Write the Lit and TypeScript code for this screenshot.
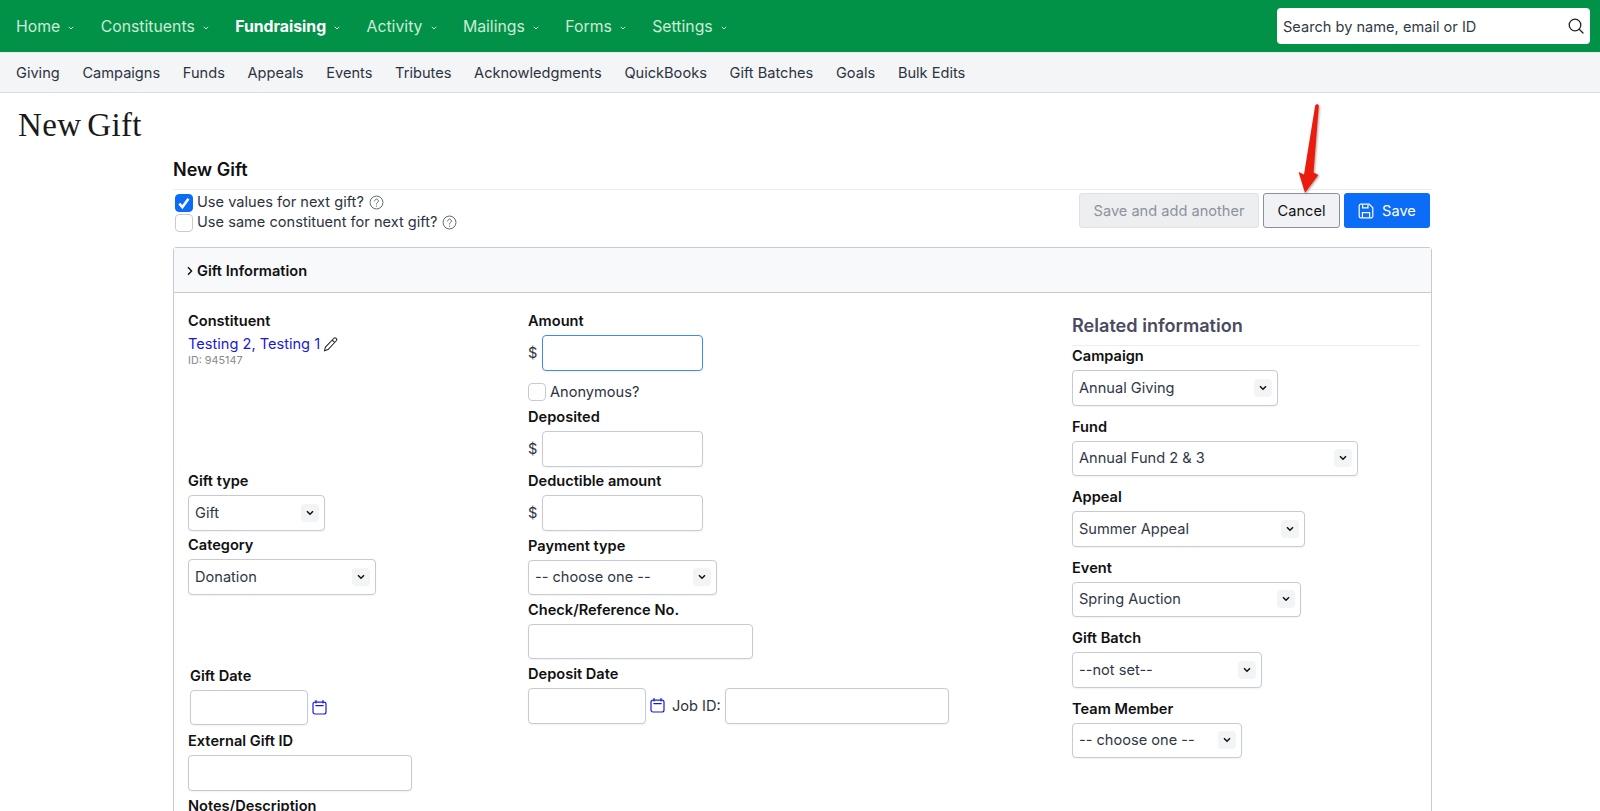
import { LitElement, html, css, svg } from "lit";
import { customElement } from "lit/decorators.js";
import { styleMap } from "lit/directives/style-map.js";

const NAV = ["Home", "Constituents", "Fundraising", "Activity", "Mailings", "Forms", "Settings"];
const SUBNAV = ["Giving", "Campaigns", "Funds", "Appeals", "Events", "Tributes", "Acknowledgments", "QuickBooks", "Gift Batches", "Goals", "Bulk Edits"];
const RELATED = [
	{ label: "Campaign", value: "Annual Giving", width: 206 },
	{ label: "Fund", value: "Annual Fund 2 & 3", width: 286 },
	{ label: "Appeal", value: "Summer Appeal", width: 233 },
	{ label: "Event", value: "Spring Auction", width: 229 },
	{ label: "Gift Batch", value: "--not set--", width: 190 },
	{ label: "Team Member", value: "-- choose one --", width: 170 },
];

const caret = html`<svg class="caret" viewBox="0 0 6 4" width="6" height="4"><path d="M.8.8 3 3 5.2.8" fill="none" stroke="currentColor" stroke-width="1"/></svg>`;
const helpIcon = html`<svg class="help" viewBox="0 0 16 16" width="15" height="15" fill="none" stroke="#62676f" stroke-width="1.05"><circle cx="8" cy="8" r="6.9"/><path d="M6 6.3a2 2 0 1 1 3.1 1.7c-.7.5-1.1.9-1.1 1.7" stroke-linecap="round"/><circle cx="8" cy="11.8" r=".7" fill="#62676f" stroke="none"/></svg>`;
const calendarIcon = svg`<svg class="cal" viewBox="0 0 15 15" width="15" height="15" fill="none" stroke="#1a1ae0" stroke-width="1.2"><rect x="1" y="2.2" width="13" height="11.8" rx="2"/><path d="M4 .5v2.5M11 .5v2.5M3.8 5.6h7.4" stroke-linecap="round"/></svg>`;

@customElement("app-root")
export class AppRoot extends LitElement {
	static override styles = css`
		:host {
			display: block;
			position: relative;
			height: 811px;
			overflow: hidden;
			background: #fff;
			color: #111;
			font-family: Inter, "Liberation Sans", sans-serif;
			font-size: 14.6px;
		}

		* {
			box-sizing: border-box;
		}

		.topbar {
			height: 52px;
			background: #019247;
			display: flex;
			align-items: center;
			justify-content: space-between;
			padding: 0 10px 0 16px;
		}

		.nav {
			display: flex;
			gap: 26.4px;
		}

		.nav-item {
			display: flex;
			align-items: center;
			gap: 8px;
			color: #cfe9d9;
			font-size: 15.8px;
		}

		.nav-item.active {
			color: #fff;
			font-weight: 700;
		}

		.caret {
			margin-top: 4px;
		}

		.search {
			width: 313px;
			height: 36px;
			background: #fff;
			border-radius: 4px;
			display: flex;
			align-items: center;
			justify-content: space-between;
			padding: 0 6px 0 6px;
			color: #333a45;
		}

		.search span {
			padding-top: 1px;
		}

		.subnav {
			height: 41px;
			background: #f4f5f7;
			border-top: 1px solid #e6e8eb;
			border-bottom: 1px solid #d9dce1;
			display: flex;
			align-items: center;
			gap: 22.7px;
			padding: 0 16px;
			color: #2c3340;
		}

		h1 {
			margin: 0;
			padding: 13px 0 0 18px;
			height: 60px;
			font-family: "Liberation Serif", serif;
			font-weight: 400;
			font-size: 33px;
			line-height: 38px;
			letter-spacing: 0.4px;
			word-spacing: -3px;
			color: #1a1a1a;
		}

		.form {
			margin-left: 173px;
			width: 1259px;
		}

		.form-title {
			height: 37px;
			border-bottom: 1px solid #ecedef;
			font-size: 18px;
			font-weight: 600;
			line-height: 33px;
		}

		.form-bar {
			display: flex;
			justify-content: space-between;
			height: 57px;
		}

		.options {
			padding: 4px 0 0 2px;
			display: flex;
			flex-direction: column;
			gap: 3px;
		}

		.check-row {
			display: flex;
			align-items: center;
			gap: 4px;
			height: 17px;
			color: #2c3340;
		}

		.lift {
			margin-top: -1px;
		}

		.help {
			margin-left: 1px;
			flex: none;
		}

		.box {
			width: 18px;
			height: 18px;
			border: 1px solid #c5cad3;
			border-radius: 4px;
			background: #fff;
			display: inline-flex;
			align-items: center;
			justify-content: center;
			flex: none;
		}

		.box.checked {
			background: #0b6cf7;
			border-color: #0b6cf7;
		}

		.buttons {
			display: flex;
			gap: 4px;
			padding: 3px 2px 0 0;
		}

		.btn {
			height: 35px;
			border-radius: 3px;
			display: flex;
			align-items: center;
			justify-content: center;
			gap: 8px;
			border: 1px solid transparent;
		}

		.btn.disabled {
			width: 180px;
			background: #eceef0;
			border-color: #dfe1e5;
			color: #8d929b;
		}

		.btn.cancel {
			width: 77px;
			background: #f1f2f5;
			border-color: #8a909a;
			color: #111;
		}

		.btn.save {
			width: 86px;
			background: #0b6cf7;
			color: #fff;
		}

		.card {
			border: 1px solid #c5cad3;
			border-bottom: 0;
			border-radius: 4px 4px 0 0;
			min-height: 600px;
		}

		.card-head {
			height: 45px;
			background: #f8f9fb;
			border-bottom: 1px solid #c5cad3;
			display: flex;
			align-items: center;
			gap: 4px;
			padding: 1px 0 0 13px;
			font-weight: 600;
		}

		.card-body {
			display: grid;
			grid-template-columns: 340px 544px 1fr;
			padding: 18px 11px 0 14px;
		}

		.col {
			display: flex;
			flex-direction: column;
		}

		.field {
			display: flex;
			flex-direction: column;
			gap: 4px;
			margin-top: 4.8px;
		}

		.field.first {
			margin-top: 0;
		}

		.field.after-date {
			margin-top: 6.2px;
		}

		label {
			display: block;
			height: 20px;
			line-height: 20px;
			font-weight: 600;
			color: #111;
		}

		.control {
			height: 35.5px;
			border: 1px solid #c5cad3;
			border-radius: 4px;
			background: #fff;
			box-shadow: 0 1px 2px rgba(20, 30, 50, 0.06);
			flex: none;
		}

		.control.focus {
			border-color: #3d8bf2;
		}

		.select {
			display: flex;
			align-items: center;
			justify-content: space-between;
			padding: 0 5px 0 6px;
			color: #2f3746;
		}

		.select-btn {
			width: 18px;
			height: 18px;
			border-radius: 4px;
			background: #f3f4f6;
			display: flex;
			align-items: center;
			justify-content: center;
		}

		.constituent {
			height: 160px;
		}

		.link-row {
			display: flex;
			align-items: center;
			gap: 3px;
			margin-top: 3px;
			color: #1a1ad6;
			height: 20px;
		}

		.id {
			font-size: 10.8px;
			color: #85898f;
			line-height: 13px;
		}

		.gift-date {
			margin: 71px 0 0 2px;
		}

		.money {
			display: flex;
			align-items: center;
			gap: 5px;
			color: #2c3340;
		}

		.anon {
			display: flex;
			align-items: center;
			gap: 4px;
			height: 18px;
			margin: 12.5px 0 6px;
			color: #2c3340;
		}

		.date-row {
			display: flex;
			align-items: center;
			gap: 4px;
			color: #2c3340;
		}

		.cal {
			flex: none;
		}

		.job {
			margin: 0 0 0 3px;
		}

		.related {
			padding-top: 3px;
		}

		.related h2 {
			margin: 0;
			height: 23px;
			line-height: 23px;
			font-size: 18.1px;
			font-weight: 600;
			color: #4a4a60;
		}

		.related-rule {
			border-top: 1px solid #ecedef;
			margin-top: 8px;
			width: 348px;
		}

		.related .field {
			margin-top: 11px;
		}

		.related .field.first {
			margin-top: 0;
		}

		.arrow {
			position: absolute;
			left: 1290px;
			top: 98px;
			pointer-events: none;
		}
	`;

	private select(value: string, width: number) {
		return html`<div class="control select" style=${styleMap({ width: `${width}px` })}>
			<span>${value}</span>
			<span class="select-btn">
				<svg viewBox="0 0 8 6" width="8" height="6"><path d="M1 1.2 4 4.2 7 1.2" fill="none" stroke="#111" stroke-width="1.5"/></svg>
			</span>
		</div>`;
	}

	private input(width: number, extra = "") {
		return html`<div class="control ${extra}" style=${styleMap({ width: `${width}px` })}></div>`;
	}

	override render() {
		return html`
			<div class="topbar">
				<div class="nav">
					${NAV.map((n) => html`<div class="nav-item ${n === "Fundraising" ? "active" : ""}">${n}${caret}</div>`)}
				</div>
				<div class="search">
					<span>Search by name, email or ID</span>
					<svg viewBox="0 0 16 16" width="16" height="16" fill="none" stroke="#222" stroke-width="1.3"><circle cx="7" cy="7" r="5.8"/><path d="m11.2 11.2 3.8 3.8" stroke-linecap="round"/></svg>
				</div>
			</div>
			<div class="subnav">${SUBNAV.map((s) => html`<span>${s}</span>`)}</div>
			<h1>New Gift</h1>
			<div class="form">
				<div class="form-title">New Gift</div>
				<div class="form-bar">
					<div class="options">
						<div class="check-row">
							<span class="box checked">
								<svg viewBox="0 0 12 12" width="14" height="14"><path d="M2 6.6 4.6 9.6 9.8 2.4" fill="none" stroke="#fff" stroke-width="2.2"/></svg>
							</span>
							<span class="lift">Use values for next gift?</span> ${helpIcon}
						</div>
						<div class="check-row"><span class="box"></span><span class="lift">Use same constituent for next gift?</span> ${helpIcon}</div>
					</div>
					<div class="buttons">
						<div class="btn disabled">Save and add another</div>
						<div class="btn cancel">Cancel</div>
						<div class="btn save">
							<svg viewBox="0 0 16 16" width="16" height="16" fill="none" stroke="#fff" stroke-width="1.2"><path d="M2.8 1.2h8.4l3.6 3.6v8.4a1.6 1.6 0 0 1-1.6 1.6H2.8a1.6 1.6 0 0 1-1.6-1.6V2.8a1.6 1.6 0 0 1 1.6-1.6Z"/><path d="M4.6 1.4v3.4h5.4V1.4M4.4 14.6V9.6h7.2v5"/></svg>
							Save
						</div>
					</div>
				</div>
				<div class="card">
					<div class="card-head">
						<svg viewBox="0 0 6 10" width="6" height="10"><path d="M1 1.2 4.6 5 1 8.8" fill="none" stroke="#111" stroke-width="1.4"/></svg>
						Gift Information
					</div>
					<div class="card-body">
						<div class="col">
							<div class="constituent">
								<label>Constituent</label>
								<div class="link-row">
									Testing 2, Testing 1
									<svg viewBox="0 0 16 16" width="15" height="15" fill="none" stroke="#222" stroke-width="1.1"><path d="M11.4 1.6a1.8 1.8 0 0 1 2.8 2.4L5.4 13.4 1.6 14.6l1-3.8ZM9.8 3.4l2.8 2.6"/></svg>
								</div>
								<div class="id">ID: 945147</div>
							</div>
							<div class="field first"><label>Gift type</label>${this.select("Gift", 137)}</div>
							<div class="field"><label>Category</label>${this.select("Donation", 188)}</div>
							<div class="field gift-date">
								<label>Gift Date</label>
								<div class="date-row">${this.input(118)}${calendarIcon}</div>
							</div>
							<div class="field after-date"><label>External Gift ID</label>${this.input(224)}</div>
							<div class="field"><label>Notes/Description</label></div>
						</div>
						<div class="col">
							<div class="field first">
								<label>Amount</label>
								<div class="money">$${this.input(161, "focus")}</div>
							</div>
							<div class="anon"><span class="box"></span><span class="lift">Anonymous?</span></div>
							<div class="field first">
								<label>Deposited</label>
								<div class="money">$${this.input(161)}</div>
							</div>
							<div class="field">
								<label>Deductible amount</label>
								<div class="money">$${this.input(161)}</div>
							</div>
							<div class="field"><label>Payment type</label>${this.select("-- choose one --", 189)}</div>
							<div class="field"><label>Check/Reference No.</label>${this.input(225)}</div>
							<div class="field">
								<label>Deposit Date</label>
								<div class="date-row">
									${this.input(118)}${calendarIcon}
									<span class="job">Job ID:</span>
									${this.input(224)}
								</div>
							</div>
						</div>
						<div class="col related">
							<h2>Related information</h2>
							<div class="related-rule"></div>
							${RELATED.map((r, i) => html`<div class="field ${i === 0 ? "first" : ""}"><label>${r.label}</label>${this.select(r.value, r.width)}</div>`)}
						</div>
					</div>
				</div>
			</div>
			<svg class="arrow" width="40" height="104" viewBox="0 0 40 104">
				<defs>
					<filter id="s" x="-50%" y="-20%" width="200%" height="140%"><feDropShadow dx="1" dy="1" stdDeviation="1" flood-color="#000" flood-opacity="0.35"/></filter>
				</defs>
				<path filter="url(#s)" d="M25.2 7.4c1-1.8 3.8-1.4 3.6.8L23.6 74.6 28.4 77 15 95 8.6 74 14 76.6Z" fill="#ea1f10"/>
			</svg>
		`;
	}
}

declare global {
	interface HTMLElementTagNameMap {
		"app-root": AppRoot;
	}
}
